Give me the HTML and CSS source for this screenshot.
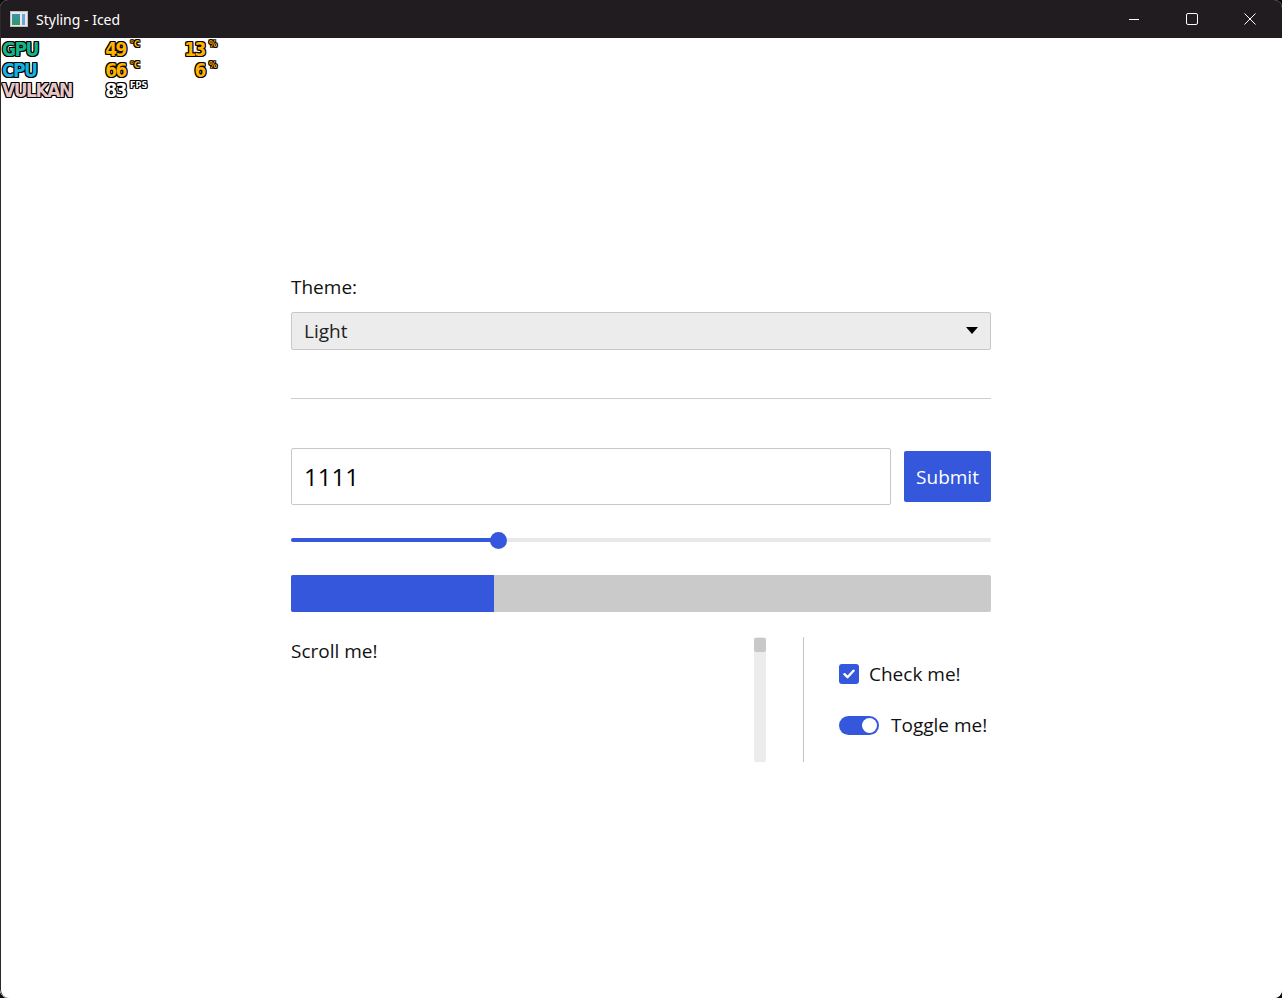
FILE: index.html
```html
<!DOCTYPE html>
<html>
<head>
<meta charset="utf-8">
<link rel="stylesheet" href="styles.css">
<title>Styling - Iced</title>
</head>
<body>
<div class="window">
  <div class="titlebar">
    <div class="title-left">
      <svg class="app-icon" width="18" height="16" viewBox="0 0 18 16">
        <rect x="0.5" y="0.5" width="17" height="15" fill="#e8e8e8" stroke="#bfbfbf"/>
        <defs><linearGradient id="g" x1="0" y1="0" x2="0" y2="1"><stop offset="0" stop-color="#3f8fb8"/><stop offset="1" stop-color="#2f9a5a"/></linearGradient></defs>
        <rect x="2" y="3" width="8" height="11" fill="url(#g)"/>
        <rect x="12" y="3" width="3" height="11" fill="#6aa7d8"/>
      </svg>
      <span class="title-text">Styling - Iced</span>
    </div>
    <div class="controls">
      <div class="ctl"><svg width="12" height="12" viewBox="0 0 12 12"><path d="M1 6.5h10" stroke="#fff" stroke-width="1"/></svg></div>
      <div class="ctl"><svg width="12" height="12" viewBox="0 0 12 12"><rect x="0.5" y="0.5" width="11" height="11" rx="1.5" fill="none" stroke="#fff" stroke-width="1"/></svg></div>
      <div class="ctl"><svg width="12" height="12" viewBox="0 0 12 12"><path d="M0.5 0.5l11 11M11.5 0.5l-11 11" stroke="#fff" stroke-width="1"/></svg></div>
    </div>
  </div>
  <div class="content">
    <div class="osd">
      <div class="osd-row"><span class="osd-label gpu">GPU</span><span class="osd-val">49</span><span class="osd-unit">°C</span><span class="osd-val2">13</span><span class="osd-unit">%</span></div>
      <div class="osd-row"><span class="osd-label cpu">CPU</span><span class="osd-val">66</span><span class="osd-unit">°C</span><span class="osd-val2">6</span><span class="osd-unit">%</span></div>
      <div class="osd-row"><span class="osd-label vk">VULKAN</span><span class="osd-val white">83</span><span class="osd-unit white">FPS</span></div>
    </div>
    <div class="column">
      <div class="label">Theme:</div>
      <div class="picklist">
        <span>Light</span>
        <svg width="12" height="8" viewBox="0 0 12 8"><path d="M0 0h12L6 7z" fill="#000"/></svg>
      </div>
      <div class="rule-h"></div>
      <div class="input-row">
        <div class="text-input">1111</div>
        <div class="button">Submit</div>
      </div>
      <div class="slider">
        <div class="rail"><div class="rail-fill" style="width:29.5%"></div></div>
        <div class="handle" style="left:29.5%"></div>
      </div>
      <div class="progress"><div class="progress-fill" style="width:29%"></div></div>
      <div class="bottom-row">
        <div class="scrollable">
          <div class="scroll-content">Scroll me!</div>
          <div class="scrollbar"><div class="thumb"></div></div>
        </div>
        <div class="rule-v"></div>
        <div class="toggles">
          <div class="check-row">
            <div class="checkbox"><svg width="12" height="10" viewBox="0 0 12 10"><path d="M1.5 5.2l3 3 6-6.5" fill="none" stroke="#fff" stroke-width="2.4" stroke-linecap="round" stroke-linejoin="round"/></svg></div>
            <span>Check me!</span>
          </div>
          <div class="toggle-row">
            <div class="toggler"><div class="knob"></div></div>
            <span>Toggle me!</span>
          </div>
        </div>
      </div>
    </div>
  </div>
</div>
</body>
</html>
```
FILE: styles.css
```css
* { box-sizing: border-box; }
html, body { margin: 0; padding: 0; }
body {
  background: #0c0c0c;
  width: 1282px;
  height: 998px;
  overflow: hidden;
  font-family: "Open Sans", "Noto Sans", sans-serif;
}
.window {
  width: 1282px;
  height: 998px;
  border-radius: 8px;
  overflow: hidden;
  background: #fff;
  display: flex;
  flex-direction: column;
  position: relative;
}
.window::after {
  content: "";
  position: absolute;
  inset: 0;
  border-radius: 8px;
  box-shadow: inset 1px 0 0 #2a2a2a;
  pointer-events: none;
}
.titlebar {
  height: 38px;
  background: #201c20;
  display: flex;
  align-items: center;
  justify-content: space-between;
  flex: none;
}
.title-left { display: flex; align-items: center; padding-left: 10px; }
.app-icon { margin-right: 8px; }
.title-text { color: #fff; font-size: 14px; font-family: "Noto Sans", sans-serif; }
.controls { display: flex; height: 38px; padding-right: 3px; }
.ctl { width: 58px; display: flex; align-items: center; justify-content: center; }
.content {
  flex: 1;
  position: relative;
  background: #fff;
  display: flex;
  justify-content: center;
  padding-top: 236px;
}
.osd {
  position: absolute;
  left: 2px;
  top: 1px;
  font-family: "DejaVu Sans Condensed", "DejaVu Sans", sans-serif;
  font-weight: bold;
  font-size: 19px;
  line-height: 20px;
  letter-spacing: -1.5px;
  text-shadow: 1px 0 #000, -1px 0 #000, 0 1px #000, 0 -1px #000, 1px 1px #000, -1px -1px #000, 1px -1px #000, -1px 1px #000;
}
.osd-row { display: flex; align-items: flex-start; height: 20.5px; }
.osd-label { width: 99px; }
.gpu { color: #17b486; }
.cpu { color: #16b2e0; }
.vk { color: #e6c6c6; }
.osd-val { width: 25px; text-align: right; color: #ffb300; }
.osd-val2 { width: 59px; text-align: right; color: #ffb300; }
.osd-unit { font-size: 9px; line-height: 11px; margin-left: 4px; color: #ffb300; letter-spacing: 0; width: 16px; }
.white { color: #fff; }
.column {
  width: 700px;
  display: flex;
  flex-direction: column;
  font-size: 19px;
  color: #111;
}
.label { height: 24px; line-height: 26px; }
.picklist {
  margin-top: 14px;
  height: 38px;
  background: #ececec;
  border: 1px solid #c8c8c8;
  border-radius: 2px;
  display: flex;
  align-items: center;
  justify-content: space-between;
  padding: 0 12px 0 12px;
  color: #222;
}
.rule-h { margin-top: 48px; height: 1px; background: #cdcdcd; }
.input-row { margin-top: 49px; display: flex; align-items: center; gap: 13px; }
.text-input {
  flex: 1;
  height: 57px;
  border: 1px solid #c8c8c8;
  border-radius: 2px;
  display: flex;
  align-items: center;
  padding-left: 12px;
  font-size: 24px;
  color: #000;
}
.button {
  width: 87px;
  height: 51px;
  background: #3457dc;
  color: #fff;
  border-radius: 2px;
  display: flex;
  align-items: center;
  justify-content: center;
  font-size: 19px;
}
.slider { position: relative; margin-top: 25px; height: 20px; }
.rail { position: absolute; left: 0; right: 0; top: 8px; height: 4px; background: #e8e8e8; border-radius: 2px; }
.rail-fill { height: 4px; background: #3457dc; border-radius: 2px; }
.handle { position: absolute; top: 2px; width: 17px; height: 17px; margin-left: -8px; border-radius: 50%; background: #3457dc; }
.progress { margin-top: 25px; height: 37px; background: #cacaca; border-radius: 2px; overflow: hidden; }
.progress-fill { height: 100%; background: #3457dc; }
.bottom-row { margin-top: 25px; height: 125px; display: flex; }
.scrollable { width: 475px; display: flex; }
.scroll-content { flex: 1; line-height: 29px; }
.scrollbar { width: 12px; height: 125px; background: #ececec; border-radius: 2px; padding-top: 1px; }
.thumb { height: 14px; background: #c8c8c8; border-radius: 2px; }
.rule-v { width: 1px; background: #c4c4c4; margin: 0 35px 0 37px; }
.toggles { width: 152px; display: flex; flex-direction: column; justify-content: center; gap: 31px; }
.check-row, .toggle-row { display: flex; align-items: center; height: 20px; white-space: nowrap; }
.checkbox {
  width: 20px; height: 20px; background: #3457dc; border-radius: 3px;
  display: flex; align-items: center; justify-content: center; margin-right: 10px;
}
.toggler {
  width: 40px; height: 19px; background: #3457dc; border-radius: 10px; position: relative; margin-right: 12px;
}
.knob { position: absolute; right: 2px; top: 2px; width: 15px; height: 15px; border-radius: 50%; background: #fff; }
```
